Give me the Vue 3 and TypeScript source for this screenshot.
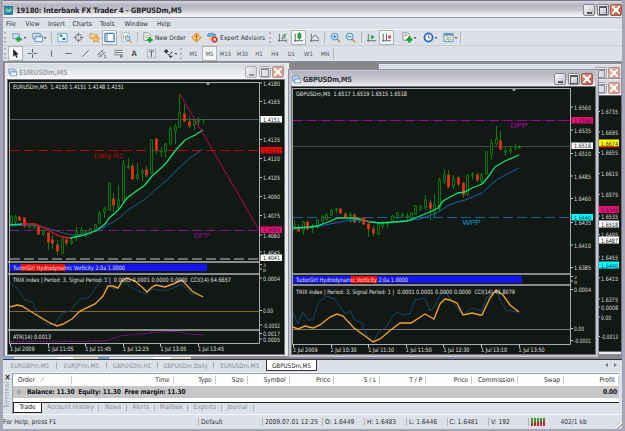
<template>
  <div class="app">
    <svg class="defs">
      <symbol id="i-addchart" viewBox="0 0 12 12">
        <path d="M1 2h7v5H1z" fill="#cfe4f4" stroke="#6f93b5" />
        <path d="M7 5v6M4 8h7" stroke="#1fa838" stroke-width="2.4" />
      </symbol>
      <symbol id="i-windows" viewBox="0 0 12 12">
        <path d="M1 1.5h8v6H1z" fill="#d8e8f8" stroke="#5c88ba" />
        <path d="M3.5 4.5h8v6h-8z" fill="#eef5fb" stroke="#5c88ba" />
        <path d="M4 5.5h7" stroke="#79a6d6" />
      </symbol>
      <symbol id="i-market" viewBox="0 0 12 12">
        <path d="M1 1.5h10v9H1z" fill="#f2f8fc" stroke="#6aa5cb" />
        <path d="M3 4h3" stroke="#2aa344" stroke-width="2.5" />
        <path d="M6 7.5h3" stroke="#2f6fb4" stroke-width="2.5" />
      </symbol>
      <symbol id="i-target" viewBox="0 0 12 12">
        <circle cx="6" cy="6" r="3.5" fill="none" stroke="#74747a" />
        <path d="M6 .5v4M6 7.5v4M.5 6h4M7.5 6h4" stroke="#74747a" />
      </symbol>
      <symbol id="i-star" viewBox="0 0 12 12">
        <path d="M1 2h4l1 1h3v4H1z" fill="#f6dc95" stroke="#c79a48" />
        <path d="M7.5 4l1.2 2.3 2.8.2-2 1.8.6 2.7-2.6-1.4L5 11l.6-2.7-2-1.8 2.7-.2z" fill="#ffd35a" stroke="#d4812b" stroke-width=".8" />
      </symbol>
      <symbol id="i-terminal" viewBox="0 0 12 12">
        <rect x="1" y="1.5" width="10" height="9" rx="1" fill="#fff" stroke="#447eb4" stroke-width="1.4" />
        <path d="M3.3 2v8" stroke="#447eb4" />
      </symbol>
      <symbol id="i-tester" viewBox="0 0 12 12">
        <path d="M1 1h8v9H1z" fill="#fff" stroke="#9cb4c9" />
        <path d="M3 3v5M5 4v3M7 3v3" stroke="#b68a53" />
        <circle cx="7.5" cy="7" r="2.4" fill="#bfe2f5" stroke="#5b96c4" />
        <path d="M9 9l2.5 2.5" stroke="#d99b3c" stroke-width="1.5" />
      </symbol>
      <symbol id="i-order" viewBox="0 0 12 12">
        <path d="M2 1h5l2 2v6H2z" fill="#fff" stroke="#8d8d8d" />
        <path d="M3.5 4h4M3.5 6h3" stroke="#999" />
        <path d="M8.5 5.5v6M5.5 8.5h6" stroke="#15a432" stroke-width="2.4" />
      </symbol>
      <symbol id="i-meta" viewBox="0 0 12 12">
        <path d="M6 .8L11.2 6 6 11.2.8 6z" fill="#ffc45c" stroke="#d98324" />
        <path d="M6 3v3.5M6 7.8v1.4" stroke="#a1450d" stroke-width="1.4" />
      </symbol>
      <symbol id="i-expert" viewBox="0 0 12 12">
        <ellipse cx="5" cy="3.5" rx="4.5" ry="2.2" fill="#69abdc" stroke="#3f79ae" stroke-width=".7" />
        <path d="M2 5h6v4.5H2z" fill="#f0c679" />
        <circle cx="8.3" cy="8.3" r="3.3" fill="#e12d26" />
        <path d="M7 7h2.6v2.6H7z" fill="#fff" />
      </symbol>
      <symbol id="i-bars" viewBox="0 0 12 12">
        <path d="M2.5 2v8.5M1 9.5h10M10 8v3" stroke="#606468" fill="none" />
        <path d="M6.5 3v5M8.5 2v5M5 7h1.5M8.5 3H10" stroke="#2e7d3e" fill="none" />
      </symbol>
      <symbol id="i-candle" viewBox="0 0 12 12">
        <path d="M2.5 2v8.5M1 9.5h10" stroke="#606468" fill="none" />
        <path d="M7 .5v8" stroke="#197a2c" />
        <path d="M5.5 2h3v4.5h-3z" fill="#2bc64a" stroke="#197a2c" />
      </symbol>
      <symbol id="i-line" viewBox="0 0 12 12">
        <path d="M2.5 2v8.5M1 9.5h10" stroke="#606468" fill="none" />
        <path d="M3 7.5L6 3.5l3 1.5 1.5 3" stroke="#4c8056" fill="none" />
      </symbol>
      <symbol id="i-zoomin" viewBox="0 0 12 12">
        <path d="M7.5 7.5l3.5 3.5" stroke="#cf9b42" stroke-width="2" />
        <circle cx="5" cy="5" r="3.6" fill="#d9f1fd" stroke="#559bcd" stroke-width="1.2" />
        <path d="M5 3v4M3 5h4" stroke="#2274ae" />
      </symbol>
      <symbol id="i-zoomout" viewBox="0 0 12 12">
        <path d="M7.5 7.5l3.5 3.5" stroke="#cf9b42" stroke-width="2" />
        <circle cx="5" cy="5" r="3.6" fill="#d9f1fd" stroke="#559bcd" stroke-width="1.2" />
        <path d="M3 5h4" stroke="#2274ae" />
      </symbol>
      <symbol id="i-scroll" viewBox="0 0 12 12">
        <path d="M2.5 2v8.5M1 9.5h10" stroke="#606468" fill="none" />
        <path d="M5.5 3l4 2.5-4 2.5z" fill="#1fa43a" />
      </symbol>
      <symbol id="i-shift" viewBox="0 0 12 12">
        <path d="M2.5 2v8.5M1 9.5h10M6 2v7" stroke="#606468" fill="none" />
        <path d="M10.5 3L7 5.5 10.5 8z" fill="#d5432e" />
      </symbol>
      <symbol id="i-indicator" viewBox="0 0 12 12">
        <path d="M1 .8h5l2 2v6H1z" fill="#fff" stroke="#8a8a8a" />
        <path d="M3 5q1-4 3-1" stroke="#555" fill="none" />
        <path d="M8 5v6.5M4.8 8.2h6.5" stroke="#0fa12b" stroke-width="2.8" />
      </symbol>
      <symbol id="i-clock" viewBox="0 0 12 12">
        <circle cx="6" cy="6" r="4.4" fill="#f3f9ff" stroke="#2465bd" stroke-width="1.9" />
        <path d="M6 3.5V6l1.8.8" stroke="#333" stroke-width=".8" fill="none" />
      </symbol>
      <symbol id="i-template" viewBox="0 0 12 12">
        <path d="M1 1.5h10v9H1z" fill="#f4faff" stroke="#5c93ad" />
        <path d="M1 3h10" stroke="#5294c4" stroke-width="2" />
        <path d="M3 6.5l2-1 2 1 2-1" stroke="#c3702c" fill="none" />
        <path d="M3 9l2-1 2 1 2-1" stroke="#3b9a47" fill="none" />
      </symbol>
      <symbol id="i-cursor" viewBox="0 0 12 12">
        <path d="M3.5 1v8.5l2-2 1.4 3.2 1.4-.6L7 7h2.5z" fill="#222" />
      </symbol>
      <symbol id="i-cross" viewBox="0 0 12 12">
        <path d="M6 1v4M6 7v4M1 6h4M7 6h4" stroke="#555" />
      </symbol>
      <symbol id="i-vline" viewBox="0 0 12 12"><path d="M6 2.5v7" stroke="#666" /></symbol>
      <symbol id="i-hline" viewBox="0 0 12 12"><path d="M2.5 6h7" stroke="#666" /></symbol>
      <symbol id="i-trend" viewBox="0 0 12 12"><path d="M2.5 9.5l7-7" stroke="#666" /></symbol>
      <symbol id="i-channel" viewBox="0 0 12 12">
        <path d="M1 8l7-6M3 10.5l7-6M3 5.5l3 4M6 3l3 4" stroke="#666" stroke-width=".9" />
        <path d="M9 8.5h2M9 10.5h2" stroke="#666" />
      </symbol>
      <symbol id="i-fibo" viewBox="0 0 12 12">
        <path d="M1.5 2.5h9M1.5 5h9M1.5 7.5h6" stroke="#777" />
        <path d="M8.5 7v4M8.5 7.5H11M8.5 9.5h2" stroke="#666" fill="none" />
      </symbol>
      <symbol id="i-label" viewBox="0 0 12 12">
        <path d="M1.5 1.5h9v9h-9z" fill="none" stroke="#888" stroke-dasharray="1 1" />
        <path d="M3.5 3.5h5M6 3.5v6" stroke="#555" />
      </symbol>
      <symbol id="i-arrows" viewBox="0 0 12 12">
        <path d="M1 3.5L3.5 1 6 3.5 3.5 6zM6 8.5h5L8.5 11z" fill="#333" />
        <path d="M4.5 6l2 2 3.5-4" stroke="#333" fill="none" />
      </symbol>
      <symbol id="i-app" viewBox="0 0 12 12">
        <path d="M.5.5h11v11H.5z" fill="#2c87ad" stroke="#1d5976" />
        <path d="M1 4q3-3 5 0t5-1v4q-3 3-5 0T1 8z" fill="#48b77d" />
        <path d="M3 9l2-4 2 3 2-5" stroke="#bfe8f4" fill="none" />
      </symbol>
    </svg>

    <header class="titlebar">
      <svg class="app-icon"><use href="#i-app" /></svg>
      <span class="app-title">19180: Interbank FX Trader 4 - GBPUSDm,M5</span>
      <div class="win-buttons">
        <i class="wb min"></i><i class="wb max"></i><i class="wb close"></i>
      </div>
    </header>

    <nav class="menu">
      <span v-for="m in menus" :key="m.label" :style="{ width: m.w + 'px' }">{{ m.label }}</span>
    </nav>

    <div class="toolbar first">
      <div
        v-for="(t, i) in mainTools"
        :key="i"
        class="tool"
        :class="[t.kind, { pressed: t.pressed }]"
        :style="{ width: t.w + 'px' }"
      >
        <svg v-if="t.icon"><use :href="'#i-' + t.icon" /></svg>
        <span v-if="t.label">{{ t.label }}</span>
        <b v-if="t.drop" class="drop"></b>
      </div>
    </div>
    <div class="toolbar second">
      <div
        v-for="(t, i) in lineTools"
        :key="i"
        class="tool"
        :class="[t.kind, { pressed: t.pressed }]"
        :style="{ width: t.w + 'px' }"
      >
        <svg v-if="t.icon"><use :href="'#i-' + t.icon" /></svg>
        <span v-if="t.label">{{ t.label }}</span>
        <b v-if="t.drop" class="drop"></b>
      </div>
    </div>

    <main class="mdi">
      <div class="minimized"></div>

      <section class="win back-top">
        <div class="win-title inactive">
          <div class="win-buttons"><i class="wb max"></i><i class="wb close"></i></div>
        </div>
      </section>
      <section class="win back">
        <div class="win-title inactive">
          <div class="win-buttons"><i class="wb max"></i><i class="wb close"></i></div>
        </div>
        <svg class="chart" viewBox="597 96 25 255" width="25" height="255">
          <rect x="597" y="96" width="25" height="255" fill="#121814" />
          <path d="M599.5 98V342" stroke="#a9adb3" />
          <g v-for="l in backAxis" :key="l.y">
            <rect v-if="l.bg" x="599" :y="l.y - 6" width="21" height="7" :fill="l.bg" />
            <path v-else :d="`M599 ${l.y - 2.5}h2`" stroke="#c8c8c8" />
            <text
              x="602"
              :y="l.y"
              :fill="l.fg || '#dedede'"
              :textLength="l.len || 17"
              lengthAdjust="spacingAndGlyphs"
            >{{ l.t }}</text>
          </g>
          <path d="M599 147h21" stroke="#f00" />
        </svg>
      </section>

      <section v-for="c in charts" :key="c.id" class="win" :class="c.id">
        <div class="win-title" :class="{ inactive: !c.active }">
          <svg class="win-icon"><use href="#i-windows" /></svg>
          <span>{{ c.title }}</span>
          <div class="win-buttons">
            <i class="wb min"></i><i class="wb max"></i><i class="wb close"></i>
          </div>
        </div>
        <svg class="chart" :viewBox="c.box.join(' ')" :width="c.box[2]" :height="c.box[3]">
          <rect :x="c.box[0]" :y="c.box[1]" :width="c.box[2]" :height="c.box[3]" fill="#121814" />
          <!-- horizontal levels -->
          <path
            v-for="(l, i) in c.levels"
            :key="'l' + i"
            :d="`M${c.left} ${l.y}H${c.right}`"
            :stroke="l.color"
            :stroke-width="l.w || 1"
            :stroke-dasharray="l.dash"
          />
          <!-- candles -->
          <g v-for="k in c.candles" :key="'k' + k[0]">
            <path :d="`M${k[0] + 0.5} ${k[1]}V${k[2]}`" stroke="#0a7c10" />
            <rect
              :x="k[0] - 0.5"
              :y="k[3]"
              width="2"
              :height="Math.max(k[4] - k[3], 0.6)"
              :fill="k[5] ? '#ff2a10' : '#121814'"
              :stroke="k[5] ? '#c4380c' : '#0a7c10'"
              stroke-width=".9"
            />
          </g>
          <polyline
            v-for="(p, i) in c.lines"
            :key="'p' + i"
            :points="p.pts"
            fill="none"
            :stroke="p.color"
            :stroke-width="p.w"
            :stroke-dasharray="p.dash"
          />
          <text
            v-for="n in c.notes"
            :key="n.t"
            class="note"
            :x="n.x"
            :y="n.y"
            :fill="n.color"
            :textLength="n.len"
            lengthAdjust="spacingAndGlyphs"
          >{{ n.t }}</text>
          <!-- vorticity strip and panel frames -->
          <rect :x="c.left" :y="c.bar.y" :width="c.bar.end - c.left" height="7" fill="#1414f4" />
          <rect :x="c.bar.r1" :y="c.bar.y" :width="c.bar.r2 - c.bar.r1" height="7" fill="#fb0808" />
          <rect
            v-for="s in c.splits"
            :key="'s' + s"
            :x="c.box[0]"
            :y="s"
            :width="c.right - c.box[0] + 1"
            height="2"
            fill="#8b8b8d"
          />
          <path
            :d="`M${c.left - 0.5} ${c.axisY}V${c.top}H${c.right + 0.5}V${c.axisY}H${c.left - 0.5}`"
            fill="none"
            stroke="#a9adb3"
          />
          <path :d="`M${c.shift - 3} ${c.top}h6l-3 3z`" fill="#8b97a8" />
          <text
            v-for="h in c.texts"
            :key="h.t"
            :x="h.x"
            :y="h.y"
            fill="#e2e2e2"
            :textLength="h.len"
            lengthAdjust="spacingAndGlyphs"
          >{{ h.t }}</text>
          <g v-for="l in c.axis" :key="'a' + l.y">
            <rect v-if="l.bg" :x="c.right + 1.5" :y="l.y - 5.5" width="21.5" height="6.5" :fill="l.bg" />
            <path v-else :d="`M${c.right + 1} ${l.y - 2.5}h2`" stroke="#c8c8c8" />
            <text
              :class="{ tiny: l.len === 3 }"
              :x="c.right + 4"
              :y="l.y"
              :fill="l.fg || '#dedede'"
              :textLength="l.len || 17"
              lengthAdjust="spacingAndGlyphs"
            >{{ l.t }}</text>
          </g>
          <g v-for="(t, i) in c.times" :key="t">
            <path :d="`M${c.left + 0.5 + Math.round(i * 37.6)} ${c.axisY}v3`" stroke="#c8c8c8" />
            <text
              :x="c.left + i * 37.6"
              :y="c.timeY"
              fill="#e2e2e2"
              :textLength="i ? 26 : 24.5"
              lengthAdjust="spacingAndGlyphs"
            >{{ t }}</text>
          </g>
        </svg>
      </section>
    </main>

    <div class="chart-tabs">
      <span
        v-for="t in chartTabs"
        :key="t.label"
        :class="{ active: t.active }"
        :style="{ width: t.w + 'px' }"
      >{{ t.label }}</span>
      <div class="tab-arrows"><i></i><i class="right"></i></div>
    </div>

    <section class="terminal">
      <aside>
        <b>×</b>
        <span>Terminal</span>
      </aside>
      <div class="terminal-body">
        <div class="columns">
          <span class="order">Order <em>⁄</em></span>
          <span v-for="(c, i) in columns" :key="i" :style="{ width: c.w + 'px' }">{{ c.label }}</span>
        </div>
        <div class="balance">
          <i></i>
          <span>Balance: 11.30&nbsp; Equity: 11.30&nbsp; Free margin: 11.30</span>
          <span class="profit">0.00</span>
        </div>
        <div class="gap"></div>
        <div class="terminal-tabs">
          <span
            v-for="(t, i) in terminalTabs"
            :key="t.label"
            :class="{ active: i === 0 }"
            :style="{ width: t.w + 'px' }"
          >{{ t.label }}</span>
        </div>
      </div>
    </section>

    <footer class="status">
      <span v-for="s in status" :key="s.label" :style="{ width: s.w + 'px' }">{{ s.label }}</span>
      <div class="traffic">
        <i class="signal"></i>
        <span>402/1 kb</span>
      </div>
      <i class="resize"></i>
    </footer>
  </div>
</template>

<script setup lang="ts">
interface Tool {
  w: number
  icon?: string
  label?: string
  kind?: string
  drop?: boolean
  pressed?: boolean
}

interface AxisLabel {
  t: string
  y: number
  bg?: string
  fg?: string
  len?: number
}

// x, high, low, body top, body bottom, 1 = bearish
type Candle = number[]

const menus = [
  { label: 'File', w: 19.5 },
  { label: 'View', w: 22.5 },
  { label: 'Insert', w: 24.5 },
  { label: 'Charts', w: 27.5 },
  { label: 'Tools', w: 24.5 },
  { label: 'Window', w: 32.5 },
  { label: 'Help', w: 30 }
]

const mainTools: Tool[] = [
  { w: 4, kind: 'grip' },
  { w: 21, icon: 'addchart', drop: true },
  { w: 20, icon: 'windows', drop: true },
  { w: 5, kind: 'sep' },
  { w: 16, icon: 'market' },
  { w: 17, icon: 'target' },
  { w: 15, icon: 'star' },
  { w: 15, icon: 'terminal', pressed: true },
  { w: 18, icon: 'tester' },
  { w: 5, kind: 'sep' },
  { w: 48, icon: 'order', label: 'New Order', kind: 'wide' },
  { w: 17, icon: 'meta' },
  { w: 64, icon: 'expert', label: 'Expert Advisors', kind: 'wide' },
  { w: 5, kind: 'grip' },
  { w: 17, icon: 'bars' },
  { w: 15, icon: 'candle', pressed: true },
  { w: 16, icon: 'line' },
  { w: 5, kind: 'sep' },
  { w: 16, icon: 'zoomin' },
  { w: 15, icon: 'zoomout' },
  { w: 6, kind: 'sep' },
  { w: 15, icon: 'scroll' },
  { w: 15, icon: 'shift', pressed: true },
  { w: 5 },
  { w: 20, icon: 'indicator', drop: true },
  { w: 21, icon: 'clock', drop: true },
  { w: 20, icon: 'template', drop: true },
  { w: 1, kind: 'sep' }
]

const lineTools: Tool[] = [
  { w: 4, kind: 'grip' },
  { w: 15, icon: 'cursor', pressed: true },
  { w: 18, icon: 'cross' },
  { w: 2 },
  { w: 17, icon: 'vline' },
  { w: 17, icon: 'hline' },
  { w: 16, icon: 'trend' },
  { w: 17, icon: 'channel' },
  { w: 16, icon: 'fibo' },
  { w: 16, label: 'A', kind: 'letter' },
  { w: 18, icon: 'label' },
  { w: 20, icon: 'arrows', drop: true },
  { w: 5, kind: 'grip' },
  { w: 17, label: 'M1', kind: 'period' },
  { w: 15, label: 'M5', kind: 'period', pressed: true },
  { w: 17, label: 'M15', kind: 'period' },
  { w: 17, label: 'M30', kind: 'period' },
  { w: 16, label: 'H1', kind: 'period' },
  { w: 16, label: 'H4', kind: 'period' },
  { w: 17, label: 'D1', kind: 'period' },
  { w: 17, label: 'W1', kind: 'period' },
  { w: 16, label: 'MN', kind: 'period' },
  { w: 1, kind: 'sep' }
]

const eurCandles: Candle[] = [
  [11, 215, 225, 217, 223, 0], [15, 215, 224, 217, 221, 0], [19, 216, 221, 217, 220, 1],
  [24, 218, 228, 218, 226, 1], [29, 224, 229, 225, 227, 0], [34, 223, 229, 225, 227, 0],
  [38, 226, 235, 227, 234, 1], [43, 229, 236, 231, 234, 0], [48, 232, 250, 233, 242, 1],
  [52, 235, 249, 240, 243, 1], [57, 240, 255, 245, 251, 1], [62, 239, 254, 239, 253, 0],
  [66, 237, 246, 240, 243, 1], [71, 237, 245, 241, 243, 0], [76, 227, 241, 232, 237, 0],
  [81, 227, 236, 230, 233, 0], [85, 230, 237, 232, 236, 0], [90, 228, 235, 229, 233, 0],
  [95, 224, 230, 225, 229, 0], [99, 211, 224, 213, 223, 0], [104, 207, 218, 209, 212, 0],
  [109, 183, 210, 183, 210, 0], [113, 193, 212, 199, 205, 1], [118, 185, 210, 200, 206, 0],
  [123, 160, 203, 164, 201, 0], [128, 158, 169, 166, 167, 0], [132, 163, 180, 166, 179, 1],
  [137, 163, 180, 175, 178, 0], [142, 169, 181, 171, 173, 0], [146, 166, 177, 170, 175, 1],
  [151, 139, 174, 140, 173, 0], [156, 138, 154, 139, 150, 1], [161, 147, 157, 151, 152, 0],
  [165, 143, 158, 144, 151, 0], [170, 126, 145, 129, 143, 0], [175, 124, 144, 126, 131, 0],
  [179, 94, 128, 113, 127, 0], [184, 104, 122, 114, 121, 1], [189, 116, 128, 122, 126, 1],
  [194, 118, 130, 121, 125, 0], [198, 117, 126, 121, 122, 0], [203, 119, 124, 119.5, 120, 0]
]

const gbpCandles: Candle[] = [
  [294, 220, 230, 225, 228, 0], [298, 224, 232, 227, 231, 1], [303, 221, 235, 222, 230, 0],
  [307, 221, 230, 222, 229, 1], [312, 224, 233, 227, 228, 0], [317, 219, 229, 220, 227, 0],
  [322, 215, 224, 217, 221, 0], [326, 213, 221, 215, 219, 0], [331, 209, 216, 211, 215, 0],
  [336, 208, 213, 209, 210, 0], [340, 208, 214, 209, 213, 1], [345, 212, 218, 214, 217, 1],
  [350, 212, 223, 215, 216, 0], [354, 213, 223, 215, 222, 1], [359, 217, 223, 218, 221, 0],
  [363, 217, 225, 218, 224, 1], [368, 222, 237, 224, 229, 1], [373, 226, 236, 229, 233, 1],
  [378, 222, 235, 224, 234, 0], [382, 221, 229, 222, 226, 0], [387, 221, 228, 223, 224, 0],
  [392, 215, 222, 216, 221, 0], [397, 212, 219, 213, 216, 0], [402, 212, 218, 215, 216, 0],
  [407, 213, 220, 216, 217, 0], [411, 212, 220, 213, 218, 0], [415, 205, 215, 206, 214, 0],
  [420, 205, 211, 206, 210, 0], [425, 195, 210, 200, 207, 0], [430, 200, 220, 203, 208, 1],
  [434, 194, 217, 205, 213, 0], [439, 178, 212, 180, 208, 0], [444, 169, 184, 175, 181, 0],
  [448, 170, 188, 175, 187, 1], [453, 175, 189, 179, 186, 0], [458, 176, 186, 178, 184, 1],
  [463, 182, 198, 183, 195, 1], [467, 175, 196, 175, 194, 0], [472, 172, 180, 174, 175, 0],
  [477, 173, 182, 175, 180, 1], [481, 173, 185, 175, 181, 0], [486, 151, 175, 152, 174, 0],
  [491, 139, 160, 143, 154, 0], [496, 126, 145, 139, 144, 0], [500, 131, 150, 141, 149, 1],
  [505, 147, 156, 151, 152, 0], [510, 146, 154, 149, 151, 0], [515, 144, 150, 147, 147.5, 0],
  [519, 145, 149, 147, 147.5, 0]
]

const charts = [
  {
    id: 'eur',
    title: 'EURUSDm,M5',
    active: false,
    box: [8, 80, 276, 274],
    left: 10,
    right: 259,
    top: 82.5,
    axisY: 343.5,
    timeY: 351,
    shift: 208,
    levels: [
      { y: 119.5, color: '#4c5a68' },
      { y: 150.5, color: '#b40404', dash: '10 4' },
      { y: 230.5, color: '#8a148c', dash: '9 2 1 2' },
      { y: 259, color: '#8a8a8a', dash: '10 4', w: 1.5 },
      { y: 311.5, color: '#8a6428' }
    ],
    candles: eurCandles,
    lines: [
      { pts: '10,226 25,225 38,226 50,229 60,232 72,235 85,234 97,231 110,224 118,219 128,210 145,199 155,190 167,180 180,167 190,158 203,149', color: '#1c5f8c', w: 1 },
      { pts: '10,225 22,224', color: '#12e070', w: 1.3 },
      { pts: '22,224 35,224 45,228 55,234 62,237 70,238', color: '#e0181c', w: 1.3 },
      { pts: '70,238 80,236 90,233 97,230 105,224 109,218 115,213 120,208 127,198 135,192 145,185 152,176 160,169 167,162 175,151 185,140 195,135 203,130', color: '#12e070', w: 1.3 },
      { pts: '180,94 259,230', color: '#b80a5c', w: 1 },
      { pts: '10,283 17,288 25,300 33,302 38,316 48,325 55,324 62,313 70,311 80,299 88,298 95,289 100,282 108,277 112,288 118,288 125,282 132,288 145,294 152,289 165,291 173,288 182,284 190,293 203,296', color: '#13486a', w: 1 },
      { pts: '10,307 17,305 22,306 30,311 40,317 50,323 57,326 63,324 72,319 80,311 95,304 103,296 108,286 113,286 118,288 122,281 127,278 135,281 142,287 147,292 152,287 156,285 165,287 173,284 182,280 192,291 203,297', color: '#f0a030', w: 1.4 },
      { pts: '10,341.5 105,341 112,339 120,336 140,334 150,333 158,332 172,331.5 182,332 188,334 203,335', color: '#a00aa0', w: 1, dash: '2 1' }
    ],
    notes: [
      { t: 'Daily R1', x: 94, y: 158, len: 29, color: '#b80808' },
      { t: 'DPP', x: 194, y: 237.5, len: 16, color: '#960a96' }
    ],
    bar: { y: 264, end: 207, r1: 21, r2: 65 },
    splits: [261, 273, 329],
    texts: [
      { t: 'EURUSDm,M5  1.4150 1.4151 1.4148 1.4151', x: 13, y: 89, len: 111 },
      { t: 'TudorGirl Hydrodynamic Vorticity 2.0a 1.0000', x: 13, y: 270, len: 112 },
      { t: 'TRIX index | Period: 3, Signal Period: 1 |  0.0001 0.0001 0.0000 0.0000  CCI(14) 64.6657', x: 13, y: 282, len: 218 },
      { t: 'ATR(14) 0.0013', x: 13, y: 338.5, len: 38 }
    ],
    axis: [
      { t: '1.4180', y: 85.5 }, { t: '1.4165', y: 104 },
      { t: '1.4151', y: 121.5, bg: '#fff', fg: '#111' }, { t: '1.4135', y: 142 },
      { t: '1.4127', y: 152.5, bg: '#e40808', fg: '#600' }, { t: '1.4120', y: 161 },
      { t: '1.4105', y: 180 }, { t: '1.4090', y: 199 }, { t: '1.4075', y: 218 },
      { t: '1.4060', y: 237.5 }, { t: '1.4064', y: 232, bg: '#e8146c', fg: '#500a60' },
      { t: '1.4045', y: 254.5 }, { t: '1.4041', y: 260, bg: '#fff', fg: '#222' },
      { t: '2', y: 267, len: 3 }, { t: '0', y: 271.5, len: 3 },
      { t: '0.0004', y: 280.5 }, { t: '0.00', y: 313, len: 10 }, { t: '-0.0002', y: 327.5 },
      { t: '0.0017', y: 336 }, { t: '0.0005', y: 341.5 }
    ] as AxisLabel[],
    times: ['1 Jul 2009', '1 Jul 11:05', '1 Jul 11:45', '1 Jul 12:25', '1 Jul 13:05', '1 Jul 13:45']
  },
  {
    id: 'gbp',
    title: 'GBPUSDm,M5',
    active: true,
    box: [292, 87, 303, 267],
    left: 293,
    right: 570,
    top: 88.5,
    axisY: 344.5,
    timeY: 352,
    shift: 514,
    levels: [
      { y: 120.5, color: '#960a96', dash: '10 2 1 1' },
      { y: 146.5, color: '#444846' },
      { y: 217.5, color: '#0e6a9c', dash: '10 4' },
      { y: 329.5, color: '#75797a' }
    ],
    candles: gbpCandles,
    lines: [
      { pts: '293,229 315,227 330,224 345,221 362,220 380,223 405,221 420,219 437,213 447,206 457,202 465,200 482,193 495,181 505,175 519,168', color: '#1464b4', w: 1 },
      { pts: '293,228 310,227 317,226 328,222 338,218 350,218 360,219 370,222 380,223 395,222 407,221 420,216 432,211 438,208 443,201 450,197 458,193 465,192 472,188 482,184 488,177 495,167 505,161 519,155', color: '#12e070', w: 1.3 },
      { pts: '359,218 370,222', color: '#e0181c', w: 1 },
      { pts: '293,313 298,324 303,312 308,320 313,320 318,303 326,296 335,299 345,314 350,311 355,320 362,323 368,337 373,342 378,333 387,326 392,317 397,312 403,315 410,314 415,300 425,298 430,311 435,306 440,295 445,291 451,300 463,315 472,308 482,311 487,297 493,293 497,290 500,300 506,310 519,312', color: '#13486a', w: 1 },
      { pts: '293,327 298,329 305,326 313,328 320,325 330,317 337,314 343,316 354,328 365,336 373,342 380,339 392,329 400,323 411,323 425,314 434,319 440,304 445,299 450,300 457,303 463,315 472,313 480,315 482,315 490,298 496,290 503,295 510,305 519,312', color: '#f0a030', w: 1.4 }
    ],
    notes: [
      { t: 'DPP', x: 510.5, y: 128, len: 17, color: '#b408a0' },
      { t: 'WPP', x: 462.5, y: 225, len: 18, color: '#0aa0d8' }
    ],
    bar: { y: 276, end: 522, r1: 351, r2: 377 },
    splits: [273, 284],
    texts: [
      { t: 'GBPUSDm,M5  1.6517 1.6519 1.6515 1.6518', x: 296, y: 95.5, len: 111 },
      { t: 'TudorGirl Hydrodynamic Vorticity 2.0a 1.0000', x: 296, y: 282, len: 112 },
      { t: 'TRIX index | Period: 3, Signal Period: 1 |  0.0001 0.0001 0.0000 0.0000  CCI(14) 41.8079', x: 296, y: 294, len: 219 }
    ],
    axis: [
      { t: '1.6560', y: 109.5 }, { t: '1.6546', y: 122.5, bg: '#e8146c', fg: '#500a60' },
      { t: '1.6535', y: 132.5 }, { t: '1.6510', y: 156 },
      { t: '1.6518', y: 148, bg: '#fff', fg: '#111' }, { t: '1.6485', y: 178.5 },
      { t: '1.6460', y: 201 }, { t: '1.6435', y: 225 },
      { t: '1.6440', y: 219.5, bg: '#0ff', fg: '#035' }, { t: '1.6410', y: 247.5 },
      { t: '1.6385', y: 270 }, { t: '2', y: 279, len: 3 }, { t: '0', y: 283.5, len: 3 },
      { t: '0.0004', y: 292 }, { t: '0.00', y: 331, len: 10 }, { t: '-0.0001', y: 343 }
    ] as AxisLabel[],
    times: ['1 Jul 2009', '1 Jul 10:30', '1 Jul 11:10', '1 Jul 11:50', '1 Jul 12:30', '1 Jul 13:10', '1 Jul 13:50']
  }
]

const backAxis: AxisLabel[] = [
  { t: '1.6735', y: 114 }, { t: '1.6695', y: 134.5 },
  { t: '1.6674', y: 145.5, bg: '#ff0', fg: '#222' }, { t: '1.6655', y: 155 },
  { t: '1.6615', y: 176 }, { t: '1.6575', y: 197 },
  { t: '1.6535', y: 218.5 }, { t: '1.6546', y: 212, bg: '#e8146c', fg: '#500a60' },
  { t: '1.6518', y: 226.5, bg: '#fff', fg: '#111' }, { t: '1.6495', y: 237 },
  { t: '1.6487', y: 242.5, bg: '#fff', fg: '#111' }, { t: '1.6455', y: 259.5 },
  { t: '1.6440', y: 267.5, bg: '#0ff', fg: '#035' }, { t: '1.6415', y: 280.5 },
  { t: '1.6375', y: 301.5 }, { t: '0.0008', y: 309.5 }, { t: '0.00', y: 319.5, len: 10 },
  { t: '-0.0013', y: 339 }
]

const chartTabs = [
  { label: 'EURGBPm,M5', w: 53.5 },
  { label: 'EURJPYm,M5', w: 50 },
  { label: 'GBPUSDm,H1', w: 51 },
  { label: 'GBPUSDm,Daily', w: 56 },
  { label: 'EURUSDm,M5', w: 52.5 },
  { label: 'GBPUSDm,M5', w: 51, active: true }
]

const columns = [
  { label: 'Time', w: 102 },
  { label: 'Type', w: 42 },
  { label: 'Size', w: 32 },
  { label: 'Symbol', w: 42 },
  { label: 'Price', w: 45 },
  { label: 'S / L', w: 46 },
  { label: 'T / P', w: 46 },
  { label: 'Price', w: 46 },
  { label: 'Commission', w: 46 },
  { label: 'Swap', w: 46 },
  { label: 'Profit', w: 55 }
]

const terminalTabs = [
  { label: 'Trade', w: 29 },
  { label: 'Account History', w: 57 },
  { label: 'News', w: 28 },
  { label: 'Alerts', w: 27.5 },
  { label: 'Mailbox', w: 33.5 },
  { label: 'Experts', w: 33.5 },
  { label: 'Journal', w: 32 }
]

const status = [
  { label: 'For Help, press F1', w: 196 },
  { label: 'Default', w: 64 },
  { label: '2009.07.01 12:25', w: 60 },
  { label: 'O: 1.6449', w: 42 },
  { label: 'H: 1.6483', w: 42 },
  { label: 'L: 1.6446', w: 40.5 },
  { label: 'C: 1.6481', w: 41.5 },
  { label: 'V: 192', w: 39.5 }
]
</script>

<style>
body {
  margin: 0;
  overflow: hidden;
}
</style>

<style scoped>
.app {
  width: 625px;
  height: 431px;
  box-sizing: border-box;
  display: flex;
  flex-direction: column;
  overflow: hidden;
  border: solid #a5a5b5;
  border-width: 0 3px 2px;
  background: #dce1e9;
  color: #2e2e32;
  font-family: 'DejaVu Sans Condensed', 'DejaVu Sans', sans-serif;
  font-stretch: condensed;
  font-size: 6.6px;
  white-space: nowrap;
}

.app * {
  box-sizing: border-box;
}

.defs {
  position: absolute;
  width: 0;
  height: 0;
}

.titlebar {
  height: 18px;
  flex: none;
  display: flex;
  align-items: center;
  padding: 2px 0 0 1px;
  border-top: 1px solid #77778a;
  border-bottom: 1px solid #9b9bab;
  background: linear-gradient(#d9d9e4, #b5b5be 25%, #c4c4cb 55%, #f4f4f6 90%);
}

.app-icon {
  width: 9px;
  height: 9px;
}

.app-title {
  margin-left: 3px;
  color: #26262c;
  font-size: 7.5px;
  font-weight: bold;
  letter-spacing: -0.14px;
}

.win-buttons {
  display: flex;
  gap: 1.5px;
  margin-left: auto;
}

.wb {
  width: 12px;
  height: 12px;
  display: flex;
  align-items: center;
  justify-content: center;
  border: 1px solid #85858f;
  border-radius: 2px;
  background: linear-gradient(135deg, #fafafc, #bcbcc8);
}

.wb::before {
  content: '';
  width: 6px;
  height: 6px;
  border: 1px solid #55555f;
  border-top-width: 2px;
}

.wb.min::before {
  width: 5px;
  border-width: 0 0 2px;
}

.wb.close {
  border-color: #a05b48;
  background: linear-gradient(135deg, #e8a27c, #bb5038);
}

.wb.close::before {
  width: 8px;
  height: 8px;
  border: 0;
  background:
    linear-gradient(45deg, transparent 43%, #fff 43% 57%, transparent 57%),
    linear-gradient(-45deg, transparent 43%, #fff 43% 57%, transparent 57%);
}

.menu {
  height: 11px;
  flex: none;
  display: flex;
  align-items: center;
  padding-left: 3px;
}

.toolbar {
  flex: none;
  display: flex;
  padding-left: 1px;
}

.first {
  height: 17px;
  border-top: 1px solid #f4f4f2;
  border-bottom: 1px solid #cdcdce;
}

.second {
  height: 15px;
}

.tool {
  flex: none;
  display: flex;
  align-items: center;
  justify-content: center;
}

.tool svg {
  width: 11px;
  height: 11px;
  flex: none;
}

.tool.wide {
  justify-content: flex-start;
  padding-left: 2px;
  gap: 2px;
  font-size: 6.4px;
}

.tool.grip {
  border-left: 2px dotted #b4b4b8;
  margin: 2px 0;
}

.tool.sep {
  background: linear-gradient(#bab6b0, #bab6b0) center / 1px 100% no-repeat;
  margin: 2px 0;
}

.tool.pressed {
  border: 1px solid #b0b4b9;
  background: #f4f5f6;
}

.tool.letter {
  font-size: 7.5px;
  font-weight: bold;
  color: #555;
}

.tool.period {
  font-size: 6px;
  color: #55555a;
}

.drop {
  margin-left: 1px;
  border: solid transparent;
  border-width: 2px 1.5px 0;
  border-top-color: #222;
}

.mdi {
  position: relative;
  height: 298px;
  flex: none;
  overflow: hidden;
  border-top: 1px solid #8d8d96;
  background: #87878b;
}

.minimized {
  position: absolute;
  left: 0;
  bottom: 0;
  width: 188px;
  height: 3px;
  background: linear-gradient(90deg, #8bb0dc 0 11px, #e2e5ea 11px 54px, #fff 54px 70px, #e8dcc0 70px 95px, #7da3d4 95px 106px, #e2e5ea 106px 150px, #fff 150px 168px, #e8dcc0 168px);
}

.win {
  position: absolute;
  display: flex;
  flex-direction: column;
  border: 1px solid #8e8e9b;
  background: #e9eaee;
}

.eur {
  left: 1px;
  top: 0;
  width: 286px;
  height: 295px;
  padding: 1px 3px 3px;
}

.gbp {
  left: 285px;
  top: 7px;
  width: 311px;
  height: 289px;
  padding: 1px 3px 3px;
  background: #c3c4cf;
}

.back-top {
  left: 375px;
  top: 1px;
  width: 244px;
  height: 30px;
  padding: 1px 1px 0;
}

.back {
  left: 390px;
  top: 16px;
  width: 229px;
  height: 277px;
  padding: 1px 0 3px;
  align-items: flex-end;
}

.win-title {
  width: 100%;
  height: 16px;
  flex: none;
  display: flex;
  align-items: center;
  background: linear-gradient(#b4b4c0, #c6c6cd 50%, #f4f4f6);
  color: #37373c;
  font-size: 7.3px;
  font-weight: bold;
  letter-spacing: -0.25px;
}

.win-title.inactive {
  background: linear-gradient(#d6d8e0, #e8e9ee 50%, #f8f8fa);
  color: #a6a8b0;
}

.win-title span {
  margin-left: 2px;
}

.win-icon {
  width: 9px;
  height: 9px;
}

.inactive .wb {
  opacity: 0.6;
}

.eur .win-buttons,
.gbp .win-buttons {
  margin-right: 2px;
}

.back .win-buttons {
  margin-right: 1px;
}

.chart {
  display: block;
  flex: none;
  outline: 1px solid #6e6e74;
}

.chart text {
  font-size: 6px;
  white-space: pre;
}

.chart .tiny {
  font-size: 4.5px;
}

.chart .note {
  font-family: 'Liberation Sans', Arial, sans-serif;
  font-size: 8px;
}

.chart-tabs {
  height: 13px;
  flex: none;
  display: flex;
  border-top: 1px solid #33333a;
  color: #8b8d92;
  font-size: 6.2px;
}

.chart-tabs > span {
  height: 11px;
  line-height: 11px;
  text-align: center;
  background: linear-gradient(#aaa, #aaa) right center / 1px 7px no-repeat;
}

.chart-tabs > span:nth-child(5) {
  background: none;
}

.chart-tabs > .active {
  border: 1px solid #33333a;
  border-top: 0;
  background: #fff;
  color: #222;
}

.tab-arrows {
  display: flex;
  gap: 6px;
  margin: 3px 5px 0 auto;
}

.tab-arrows i {
  width: 3px;
  height: 4px;
  border: solid transparent;
  border-width: 2px 3px 2px 0;
  border-right-color: #77777c;
}

.tab-arrows i.right {
  border-width: 2px 0 2px 3px;
  border-left-color: #77777c;
}

.terminal {
  height: 42px;
  flex: none;
  display: flex;
  border-top: 1px solid #f4f4f4;
}

.terminal aside {
  width: 9px;
  display: flex;
  flex-direction: column;
  align-items: center;
  line-height: 9px;
}

.terminal aside b {
  font-size: 8px;
  color: #222;
}

.terminal aside span {
  writing-mode: vertical-rl;
  transform: rotate(180deg);
  color: #a5a8af;
  font-size: 7px;
  line-height: 7px;
}

.terminal-body {
  width: 607px;
  border-top: 1px solid #9b9ba2;
  border-left: 1px solid #9b9ba2;
}

.columns {
  height: 12px;
  display: flex;
  align-items: center;
  background: #fdfdfd;
}

.columns span {
  padding-right: 3px;
  text-align: right;
  border-right: 1px solid #cacacc;
}

.columns .order {
  width: 59px;
  padding-left: 5px;
  text-align: left;
}

.order em {
  margin-left: 5px;
  color: #888;
}

.balance {
  height: 12px;
  display: flex;
  align-items: center;
  background: #c6c6c8;
  color: #111;
  font-size: 6.6px;
  font-weight: bold;
  letter-spacing: -0.15px;
}

.balance i {
  width: 4px;
  height: 4px;
  margin: 0 6px 0 4px;
  border: 1px solid #8f8f92;
  border-radius: 50%;
}

.balance .profit {
  margin-left: auto;
  padding-right: 2px;
}

.gap {
  height: 4px;
  background: #fff;
}

.terminal-tabs {
  height: 12px;
  display: flex;
  border-top: 1px solid #222;
  color: #8b8d92;
}

.terminal-tabs span {
  height: 10px;
  line-height: 9.5px;
  text-align: center;
  background: linear-gradient(#aaa, #aaa) right center / 1px 6px no-repeat;
}

.terminal-tabs .active {
  border: 1px solid #222;
  border-top: 0;
  background: #fff;
  color: #222;
}

.status {
  flex: 1;
  display: flex;
  align-items: center;
  border-top: 1px solid #f6f6f6;
}

.status > span {
  padding-left: 2px;
  border-right: 1px solid #b4b4b8;
}

.status > span:first-child {
  padding-left: 0;
}

.traffic {
  display: flex;
  align-items: center;
  gap: 16px;
  padding-left: 2px;
}

.signal {
  width: 14px;
  height: 8px;
  background:
    repeating-linear-gradient(90deg, transparent 0 2px, #dce1e9 2px 3px),
    linear-gradient(170deg, #3c9a28 0 45%, #b8282c 50%);
}

.resize {
  width: 9px;
  height: 9px;
  margin-left: auto;
  align-self: flex-end;
  background: repeating-linear-gradient(135deg, #a5a5ac 0 1px, #eef0f4 1px 3px);
  clip-path: polygon(100% 0, 100% 100%, 0 100%);
}
</style>
